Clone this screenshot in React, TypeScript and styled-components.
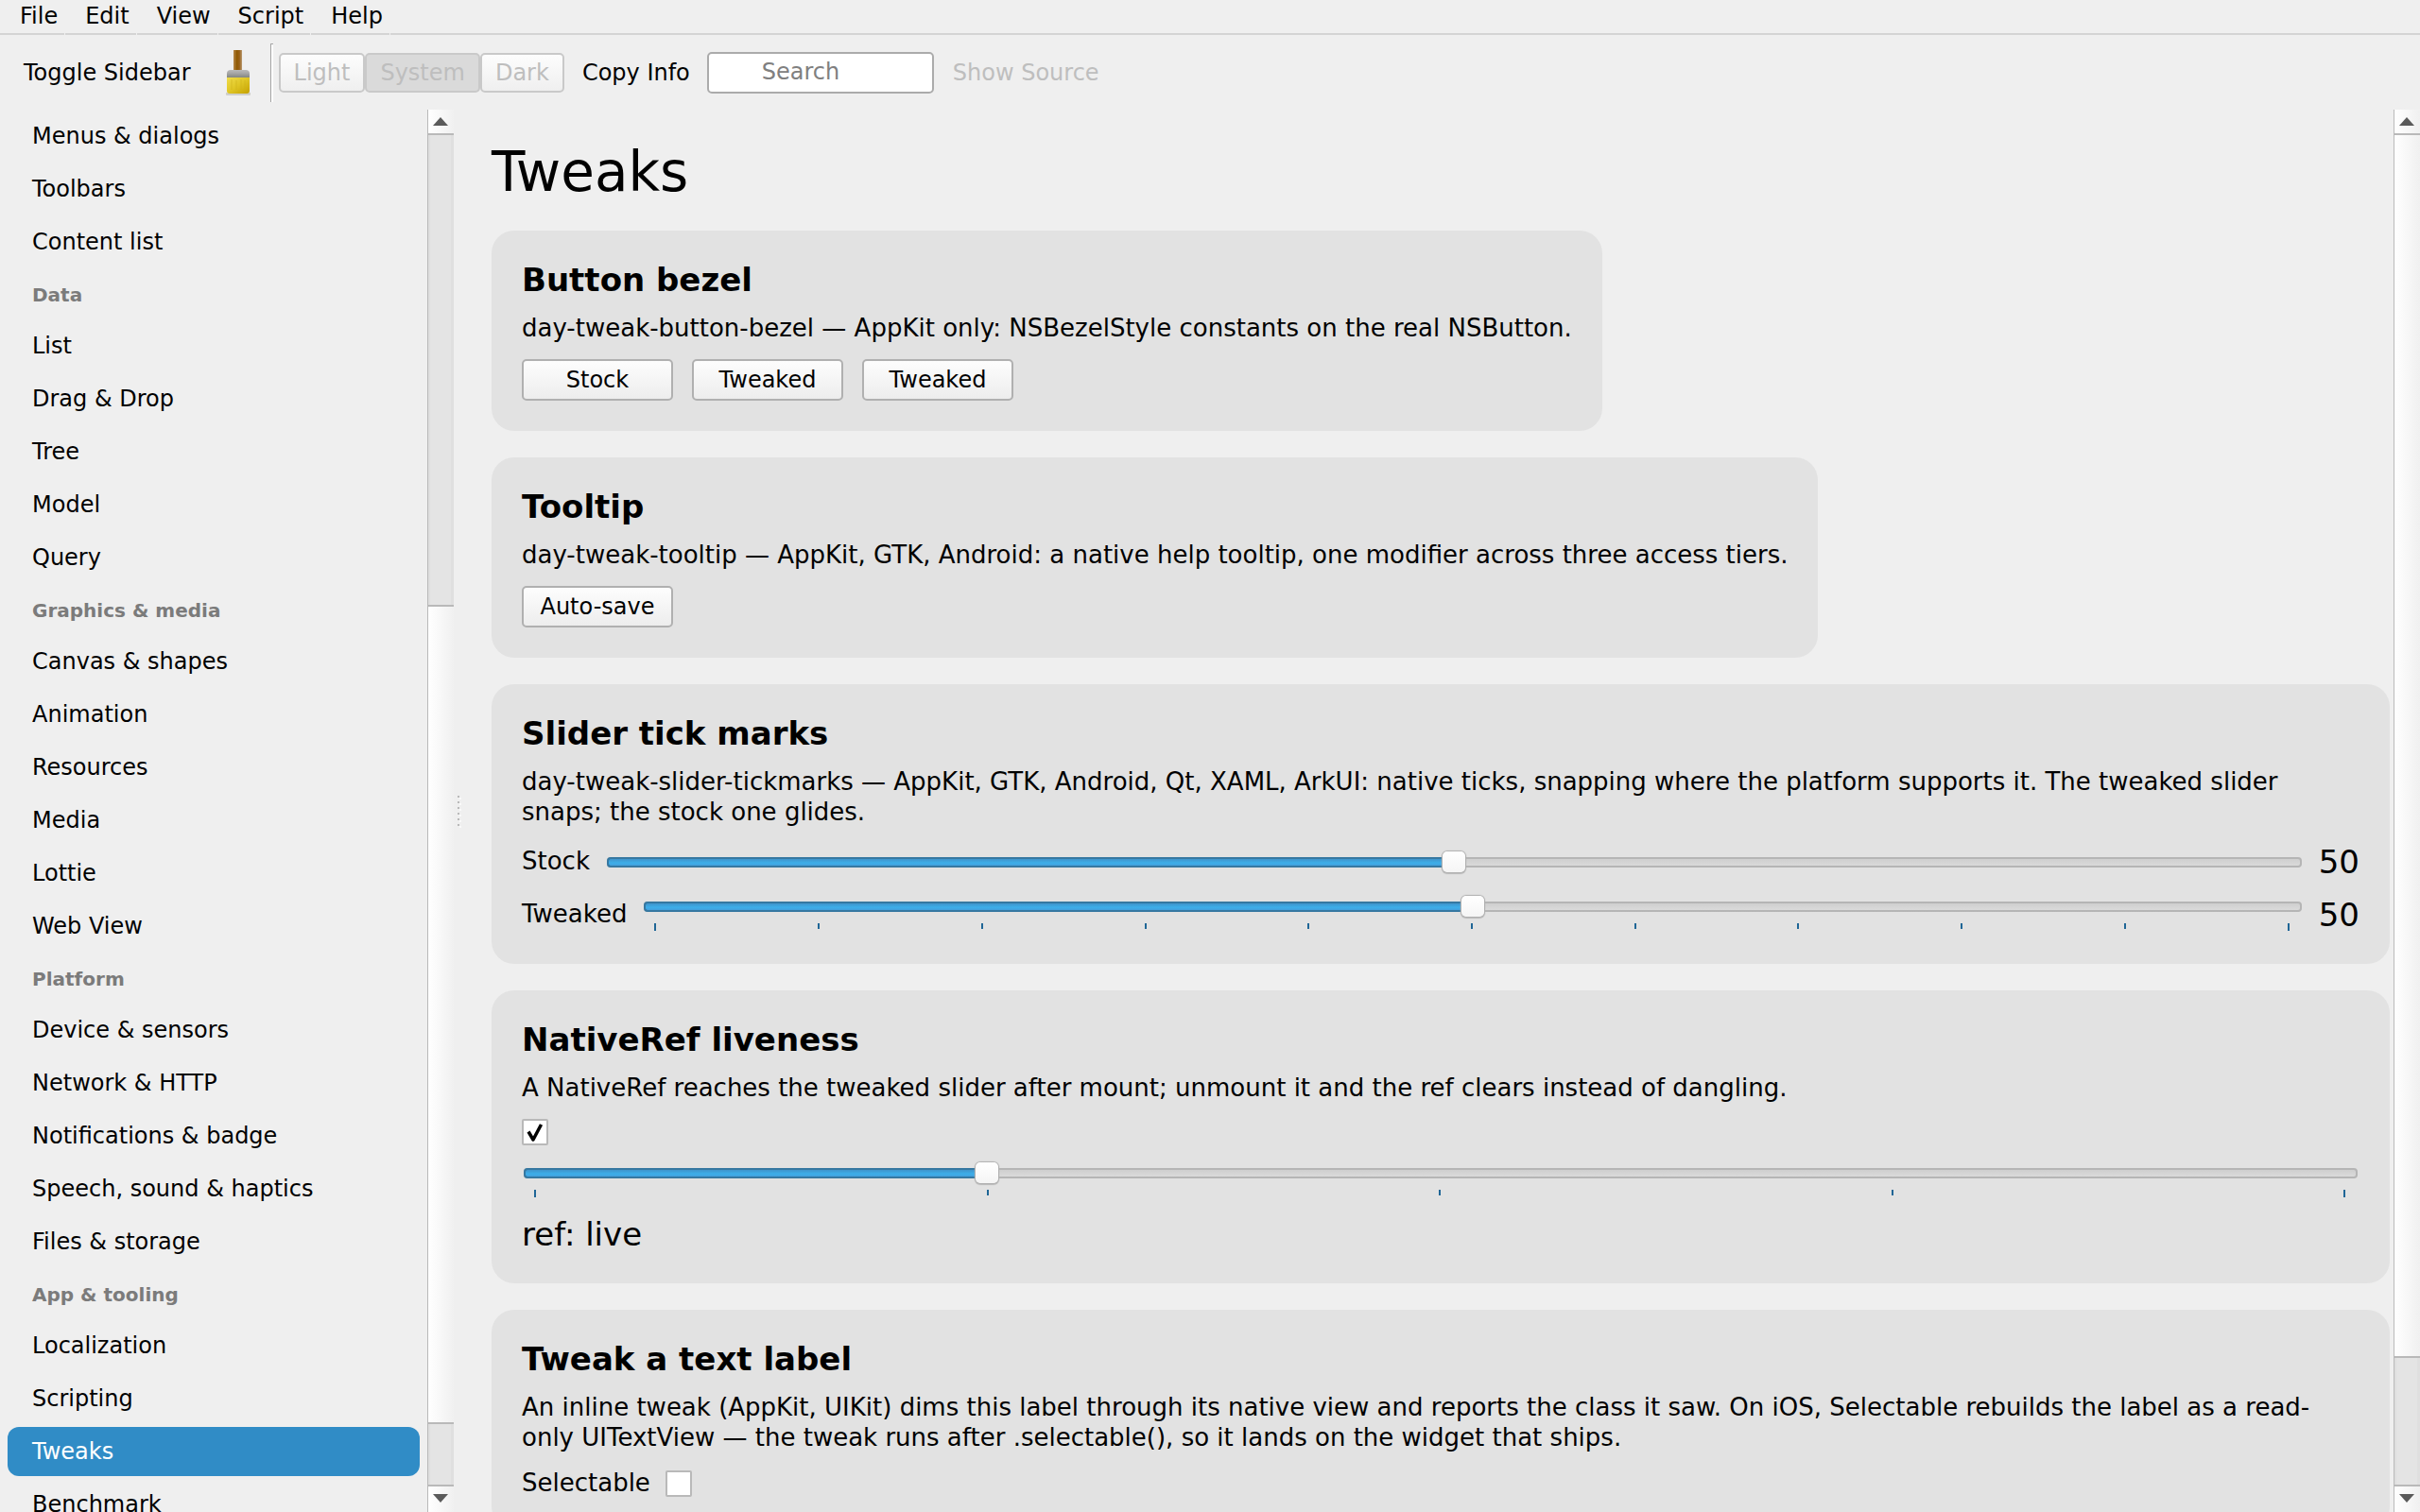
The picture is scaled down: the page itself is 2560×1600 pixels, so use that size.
import React, { useState } from "react";
import styled, { createGlobalStyle, css } from "styled-components";

const GlobalStyle = createGlobalStyle`
  *, *::before, *::after { box-sizing: border-box; }
  html, body { margin: 0; height: 100%; overflow: hidden; }
  #root { height: 100%; }
  body {
    background: #efefef;
    color: #000;
    font-family: "DejaVu Sans", Verdana, sans-serif;
    font-size: 24px;
    line-height: 28px;
  }
  button, input { font: inherit; color: inherit; margin: 0; }
`;

const Shell = styled.div`
  display: flex;
  flex-direction: column;
  height: 100vh;
  overflow: hidden;
`;

/* ---------- Menu bar ---------- */

const MenuBar = styled.nav`
  display: flex;
  flex: none;
  gap: 1px;
`;

const MenuItem = styled.button`
  border: 0;
  border-bottom: 2px solid #d4d4d4;
  background: none;
  padding: 3px 7px 4px 21px;
`;

const MenuRest = styled.div`
  flex: 1;
  border-bottom: 2px solid #d4d4d4;
`;

/* ---------- Toolbar ---------- */

const ToolBar = styled.header`
  display: flex;
  flex: none;
  align-items: center;
  height: 79px;
  padding: 0 25px;
`;

const ToolButton = styled.button`
  border: 0;
  background: none;
  padding: 0;
  white-space: nowrap;
  &:disabled { color: #bebebe; }
`;

const IconButton = styled(ToolButton)`
  display: flex;
  margin: 0 19px 0 37px;
`;

const ToolSeparator = styled.div`
  width: 3px;
  height: 62px;
  margin-right: 6px;
  border-top: 1px solid #a4a4a4;
  border-left: 1px solid #a4a4a4;
  background: #fff;
`;

const Segments = styled.div`
  display: flex;
  margin-right: 19px;
`;

const Segment = styled.button<{ $on?: boolean }>`
  height: 42px;
  padding: 0 14px;
  border: 2px solid #c9c9c9;
  border-radius: 5px;
  background: ${(p) => (p.$on ? "#dadada" : "linear-gradient(#fdfdfd, #efefef)")};
  color: #bebebe;
  line-height: 38px;
`;

const SearchBox = styled.input`
  width: 240px;
  height: 44px;
  margin: 0 20px 0 18px;
  padding: 0 8px 2px 56px;
  border: 2px solid #ababab;
  border-radius: 5px;
  background: #fff;
  outline: 0;
  &::placeholder { color: #808080; opacity: 1; }
`;

/* ---------- Body panes ---------- */

const Panes = styled.div`
  display: flex;
  flex: 1;
  min-height: 0;
`;

const SideBar = styled.aside`
  flex: none;
  width: 452px;
  overflow: hidden;
`;

const NavGroup = styled.h2`
  height: 54px;
  margin: 0;
  padding: 0 34px;
  color: #7b7b7b;
  font-size: 20px;
  font-weight: bold;
  line-height: 56px;
`;

const NavItem = styled.a<{ $active?: boolean }>`
  display: block;
  height: 52px;
  margin: 2px 8px;
  padding: 0 26px;
  border-radius: 12px;
  color: #000;
  line-height: 52px;
  text-decoration: none;
  white-space: nowrap;
  ${(p) => p.$active && css`background: #308cc6; color: #fff;`}
`;

const NavRow = styled.div`
  display: flow-root;
`;

const Splitter = styled.div`
  display: flex;
  flex: none;
  flex-direction: column;
  align-items: center;
  justify-content: center;
  gap: 4px;
  width: 10px;
`;

const Grip = styled.i`
  width: 2px;
  height: 2px;
  background: #b9b9b9;
  box-shadow: 2px 2px 0 #fafafa;
`;

const Main = styled.main`
  flex: 1;
  min-width: 0;
  overflow: hidden;
  padding: 32px 4px 0 30px;
`;

const Cards = styled.div`
  display: flex;
  flex-direction: column;
  align-items: flex-start;
  gap: 28px;
`;

const PageTitle = styled.h1`
  margin: 0 0 28px;
  font-size: 58px;
  font-weight: normal;
  line-height: 68px;
`;

const CardBox = styled.section<{ $wide?: boolean }>`
  display: flex;
  flex-direction: column;
  align-items: stretch;
  gap: 16px;
  width: ${(p) => (p.$wide ? "100%" : "auto")};
  max-width: 100%;
  padding: 32px;
  border-radius: 24px;
  background: #e2e2e2;
`;

const CardTitle = styled.h2`
  margin: 0;
  font-size: 34px;
  font-weight: bold;
  line-height: 40px;
`;

const CardText = styled.p`
  margin: -1px 0 1px;
  font-size: 26px;
  line-height: 32px;
`;

const ButtonRow = styled.div`
  display: flex;
  gap: 20px;
`;

const PushButton = styled.button`
  width: 160px;
  height: 44px;
  padding: 0;
  border: 2px solid #b0b0b0;
  border-radius: 5px;
  background: linear-gradient(#fdfdfd, #ededed);
`;

const FieldRow = styled.div`
  display: flex;
  align-items: center;
  gap: 16px;
`;

const FieldLabel = styled.label`
  padding-bottom: 2px;
  font-size: 26px;
  line-height: 30px;
`;

const Value = styled.output`
  display: block;
  font-size: 34px;
  line-height: 40px;
`;

const CheckBox = styled.input.attrs({ type: "checkbox" })`
  appearance: none;
  width: 28px;
  height: 28px;
  border: 2px solid #b9b9b9;
  border-radius: 2px;
  background: #fff;
`;

const CheckWrap = styled.span`
  display: grid;
  width: 28px;
  height: 28px;
  > * { grid-area: 1 / 1; }
  > svg { pointer-events: none; }
`;

/* ---------- Sliders ---------- */

const TickedSlider = styled.div`
  flex: 1;
  height: 40px;
`;

const Liveness = styled.div`
  padding-top: 2px;
`;

const RangeBox = styled.div`
  display: grid;
  flex: 1;
  align-items: center;
  height: 22px;
  > * { grid-area: 1 / 1; }
`;

const Rail = styled.div`
  height: 11px;
  margin: 0 2px;
  border: 2px solid #b5b5b5;
  border-radius: 4px;
  background: linear-gradient(#cfcfcf, #dadada);
`;

const Fill = styled(Rail)`
  border-color: #3678a1;
  border-right: 0;
  border-radius: 4px 0 0 4px;
  background: linear-gradient(#4094cb, #3daee9 60%, #439fdc);
`;

const Range = styled.input.attrs({ type: "range" })`
  appearance: none;
  width: 100%;
  height: 22px;
  background: none;
  outline: 0;

  &::-webkit-slider-runnable-track { height: 22px; }
  &::-webkit-slider-thumb {
    appearance: none;
    width: 24px;
    height: 22px;
    border-radius: 5px;
    background: linear-gradient(#fff, #f5f5f5);
    box-shadow: 0 0 1px 1px #b0b0b0, 0 1px 1px 1px #bcbcbc;
  }
`;

const Ticks = styled.div`
  display: flex;
  justify-content: space-between;
  margin: 7px 15px 0 13px;
`;

const Tick = styled.i`
  width: 2px;
  height: 6px;
  background: #1f6696;
  &:first-child, &:last-child { height: 8px; }
`;

/* ---------- Scroll bars ---------- */

const ScrollTrack = styled.div`
  display: flex;
  flex: none;
  flex-direction: column;
  width: 28px;
  border-left: 1px solid #b9b9b9;
`;

const ScrollButton = styled.button<{ $down?: boolean }>`
  display: flex;
  flex: none;
  align-items: center;
  justify-content: center;
  height: ${(p) => (p.$down ? "29px" : "27px")};
  padding: ${(p) => (p.$down ? "0 2px 2px 0" : "0 2px 0 0")};
  border: 0;
  border-${(p) => (p.$down ? "top" : "bottom")}: 2px solid #b9b9b9;
  background: linear-gradient(90deg, #fff, #f0f0f0);
`;

const Groove = styled.div<{ $grow: number }>`
  flex: ${(p) => p.$grow} 0 0;
  background: #e4e4e4;
  box-shadow: inset 2px 0 #dedede, inset -3px 0 #dfdfdf;
`;

const Handle = styled.div<{ $grow: number; $top?: boolean }>`
  flex: ${(p) => p.$grow} 0 0;
  border-top: ${(p) => (p.$top ? "0" : "2px solid #b9b9b9")};
  border-bottom: 2px solid #b9b9b9;
  background: linear-gradient(90deg, #fff, #f0f0f0);
`;

function ScrollBar({ before, size, after }: { before: number; size: number; after: number }) {
  return (
    <ScrollTrack>
      <ScrollButton aria-label="Scroll up">
        <svg width="16" height="10" viewBox="0 0 16 10"><path d="M8 0 16 9H0z" fill="#5a5a5a" /></svg>
      </ScrollButton>
      {before > 0 && <Groove $grow={before} />}
      <Handle $grow={size} $top={before === 0} />
      <Groove $grow={after} />
      <ScrollButton $down aria-label="Scroll down">
        <svg width="16" height="10" viewBox="0 0 16 10"><path d="M0 0H16L8 9z" fill="#5a5a5a" /></svg>
      </ScrollButton>
    </ScrollTrack>
  );
}

function BrushIcon() {
  return (
    <svg width="28" height="48" viewBox="0 0 28 48" aria-hidden="true">
      <defs>
        <linearGradient id="wood" x1="0" x2="1"><stop offset="0" stopColor="#b5874a" /><stop offset=".4" stopColor="#8f5902" /><stop offset=".7" stopColor="#99621a" /><stop offset="1" stopColor="#b99a72" /></linearGradient>
        <linearGradient id="metal" x1="0" x2="0" y1="0" y2="1"><stop offset="0" stopColor="#b9b9b9" /><stop offset=".4" stopColor="#a5a5a5" /><stop offset="1" stopColor="#7c7f7a" /></linearGradient>
        <linearGradient id="bristle" x1="0" x2="1" y1="0" y2="1"><stop offset="0" stopColor="#f0dc4a" /><stop offset=".5" stopColor="#dfc524" /><stop offset="1" stopColor="#c4a000" /></linearGradient>
      </defs>
      <path d="M0 45h26v2q0 1-1 1H1q-1 0-1-1z" fill="#cfcfcb" />
      <path d="M8 0h9v22H8z" fill="url(#wood)" />
      <path d="M1 30v-5q0-4 4-4h16q4 0 4 4v5z" fill="url(#metal)" />
      <path d="M1 29h24v14q0 3-3 3H4q-3 0-3-3z" fill="url(#bristle)" />
      <path d="M6 31v11M11 32v10M16 31v11M20 32v9" stroke="#cfb21a" strokeWidth="1" opacity=".6" />
    </svg>
  );
}

type Option = { name: string; group?: boolean };

const navigation: Option[] = [
  { name: "Menus & dialogs" },
  { name: "Toolbars" },
  { name: "Content list" },
  { name: "Data", group: true },
  { name: "List" },
  { name: "Drag & Drop" },
  { name: "Tree" },
  { name: "Model" },
  { name: "Query" },
  { name: "Graphics & media", group: true },
  { name: "Canvas & shapes" },
  { name: "Animation" },
  { name: "Resources" },
  { name: "Media" },
  { name: "Lottie" },
  { name: "Web View" },
  { name: "Platform", group: true },
  { name: "Device & sensors" },
  { name: "Network & HTTP" },
  { name: "Notifications & badge" },
  { name: "Speech, sound & haptics" },
  { name: "Files & storage" },
  { name: "App & tooling", group: true },
  { name: "Localization" },
  { name: "Scripting" },
  { name: "Tweaks" },
  { name: "Benchmark" },
];

function Card({ title, text, wide, children }: { title: string; text: string; wide?: boolean; children: React.ReactNode }) {
  return (
    <CardBox $wide={wide}>
      <CardTitle>{title}</CardTitle>
      <CardText>{text}</CardText>
      {children}
    </CardBox>
  );
}

function Slider({ id, label, value, step, onChange, ticks }: {
  id: string; label?: string; value: number; step: number; onChange: (v: number) => void; ticks?: number;
}) {
  const range = (
    <RangeBox>
      <Rail />
      <Fill style={{ width: `calc(10px + (100% - 24px) * ${value / 100})` }} />
      <Range
        id={id}
        aria-label={label}
        min={0}
        max={100}
        step={step}
        value={value}
        onChange={(e: React.ChangeEvent<HTMLInputElement>) => onChange(Number(e.target.value))}
      />
    </RangeBox>
  );
  if (!ticks) return range;
  return (
    <TickedSlider>
      {range}
      <Ticks>{Array.from({ length: ticks }, (_, i) => <Tick key={i} />)}</Ticks>
    </TickedSlider>
  );
}

export default function App() {
  const [stock, setStock] = useState(50);
  const [tweaked, setTweaked] = useState(50);
  const [live, setLive] = useState(25);
  const [mounted, setMounted] = useState(true);
  const [selectable, setSelectable] = useState(false);

  return (
    <Shell>
      <GlobalStyle />
      <MenuBar>
        {["File", "Edit", "View", "Script", "Help"].map((m) => <MenuItem key={m}>{m}</MenuItem>)}
        <MenuRest />
      </MenuBar>
      <ToolBar>
        <ToolButton>Toggle Sidebar</ToolButton>
        <IconButton aria-label="Appearance"><BrushIcon /></IconButton>
        <ToolSeparator />
        <Segments>
          <Segment disabled>Light</Segment>
          <Segment disabled $on>System</Segment>
          <Segment disabled>Dark</Segment>
        </Segments>
        <ToolButton>Copy Info</ToolButton>
        <SearchBox type="text" placeholder="Search" aria-label="Search" />
        <ToolButton disabled>Show Source</ToolButton>
      </ToolBar>
      <Panes>
        <SideBar>
          {navigation.map((n) =>
            n.group
              ? <NavGroup key={n.name}>{n.name}</NavGroup>
              : <NavRow key={n.name}><NavItem href="#" $active={n.name === "Tweaks"}>{n.name}</NavItem></NavRow>
          )}
        </SideBar>
        <ScrollBar before={498} size={866} after={64} />
        <Splitter>{Array.from({ length: 6 }, (_, i) => <Grip key={i} />)}</Splitter>
        <Main>
          <PageTitle>Tweaks</PageTitle>
          <Cards>
            <Card title="Button bezel" text="day-tweak-button-bezel — AppKit only: NSBezelStyle constants on the real NSButton.">
              <ButtonRow>
                <PushButton>Stock</PushButton>
                <PushButton>Tweaked</PushButton>
                <PushButton>Tweaked</PushButton>
              </ButtonRow>
            </Card>
            <Card title="Tooltip" text="day-tweak-tooltip — AppKit, GTK, Android: a native help tooltip, one modifier across three access tiers.">
              <ButtonRow><PushButton>Auto-save</PushButton></ButtonRow>
            </Card>
            <Card wide title="Slider tick marks" text="day-tweak-slider-tickmarks — AppKit, GTK, Android, Qt, XAML, ArkUI: native ticks, snapping where the platform supports it. The tweaked slider snaps; the stock one glides.">
              <FieldRow>
                <FieldLabel htmlFor="stock">Stock</FieldLabel>
                <Slider id="stock" value={stock} step={1} onChange={setStock} />
                <Value htmlFor="stock">{stock}</Value>
              </FieldRow>
              <FieldRow>
                <FieldLabel htmlFor="tweaked">Tweaked</FieldLabel>
                <Slider id="tweaked" value={tweaked} step={10} onChange={setTweaked} ticks={11} />
                <Value htmlFor="tweaked">{tweaked}</Value>
              </FieldRow>
            </Card>
            <Card wide title="NativeRef liveness" text="A NativeRef reaches the tweaked slider after mount; unmount it and the ref clears instead of dangling.">
              <CheckWrap>
                <CheckBox aria-label="Mounted" checked={mounted} onChange={(e) => setMounted(e.target.checked)} />
                {mounted && (
                  <svg width="28" height="28" viewBox="0 0 28 28">
                    <path d="M7 13.500 12 22 20.500 6" fill="none" stroke="#000" strokeWidth="3.500" strokeLinejoin="round" />
                  </svg>
                )}
              </CheckWrap>
              <Liveness>
                <Slider id="live" label="Live slider" value={live} step={25} onChange={setLive} ticks={5} />
              </Liveness>
              <Value>ref: live</Value>
            </Card>
            <Card wide title="Tweak a text label" text="An inline tweak (AppKit, UIKit) dims this label through its native view and reports the class it saw. On iOS, Selectable rebuilds the label as a read-only UITextView — the tweak runs after .selectable(), so it lands on the widget that ships.">
              <FieldRow>
                <FieldLabel htmlFor="selectable">Selectable</FieldLabel>
                <CheckBox id="selectable" checked={selectable} onChange={(e) => setSelectable(e.target.checked)} />
              </FieldRow>
            </Card>
          </Cards>
        </Main>
        <ScrollBar before={0} size={1295} after={134} />
      </Panes>
    </Shell>
  );
}
